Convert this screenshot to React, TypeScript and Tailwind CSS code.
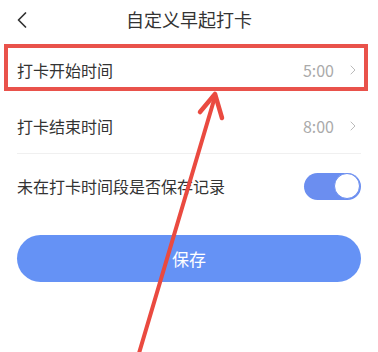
import { ChevronLeft, ChevronRight } from "lucide-react";

type RowProps = {
  label: string;
  value: string;
  divider?: boolean;
};

function TimeRow({ label, value, divider }: RowProps) {
  return (
    <div className={`mx-[17px] flex h-[56px] items-center justify-between ${divider ? "border-b border-[#f0f0f0]" : ""}`}>
      <span className="text-[16px] text-[#333333]">{label}</span>
      <div className="flex items-center gap-[11px]">
        <span className="text-[16px] text-[#aaaaaa]">{value}</span>
        <ChevronRight className="h-[16px] w-[16px] text-[#bbbbbb]" strokeWidth={1.5} />
      </div>
    </div>
  );
}

export default function App() {
  return (
    <div
      className="relative h-[352px] w-[378px] overflow-hidden bg-white"
      style={{ fontFamily: '"Noto Sans CJK SC", "Noto Sans", sans-serif' }}
    >
      <header className="relative flex h-[42px] items-center justify-center">
        <ChevronLeft className="absolute left-[8px] top-[6px] h-[28px] w-[28px] text-[#333333]" strokeWidth={1.5} />
        <h1 className="-mt-[3px] text-[18px] text-[#333333]">自定义早起打卡</h1>
      </header>

      <TimeRow label="打卡开始时间" value="5:00" />
      <TimeRow label="打卡结束时间" value="8:00" divider />

      <div className="mx-[17px] flex h-[64px] items-center justify-between">
        <span className="text-[16px] text-[#333333]">未在打卡时间段是否保存记录</span>
        <div className="flex h-[27px] w-[57px] items-center justify-end rounded-full bg-[#6b8ef0] p-[1px]">
          <div className="h-[26px] w-[26px] rounded-full border-[1.5px] border-[#6b8ef0] bg-white" />
        </div>
      </div>

      <div className="mx-[17px] mt-[17px]">
        <button className="flex h-[47px] w-full items-center justify-center rounded-full bg-[#6592f5] text-[17px] text-white">
          保存
        </button>
      </div>

      {/* annotation overlay */}
      <div className="pointer-events-none absolute left-[4px] top-[44px] h-[47px] w-[364px] border-[4px] border-[#e9524b]" />
      <svg className="pointer-events-none absolute left-0 top-0" width="378" height="352" viewBox="0 0 378 352">
        <line x1="137" y1="360" x2="214" y2="100" stroke="#ea4a40" strokeWidth="4" strokeLinecap="round" />
        <path d="M200 112 L215 94 L222 118" fill="none" stroke="#ea4a40" strokeWidth="4.5" strokeLinecap="round" strokeLinejoin="round" />
      </svg>
    </div>
  );
}
